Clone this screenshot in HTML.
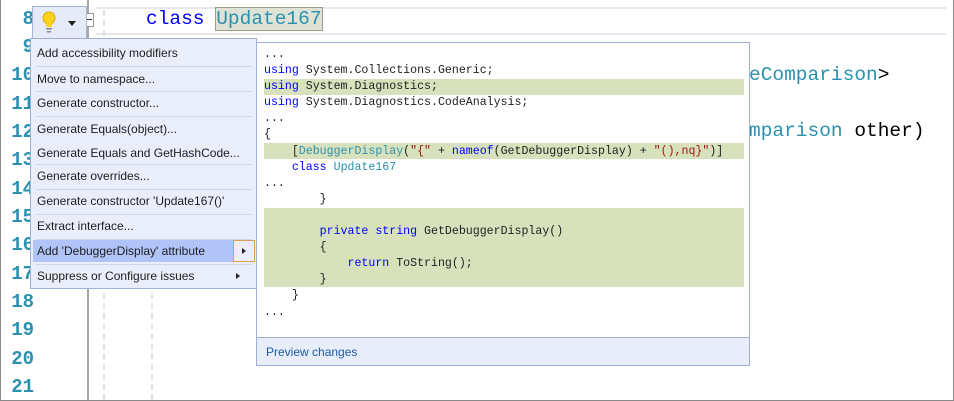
<!DOCTYPE html>
<html><head><style>
*{margin:0;padding:0;box-sizing:border-box}
body{width:954px;height:401px;overflow:hidden;background:#fff;position:relative;font-family:"Liberation Sans",sans-serif}
.frame{position:absolute;left:0;top:0;width:954px;height:401px;border:1px solid #8a8a8a;border-top:none}
.ln{position:absolute;left:0;width:34px;text-align:right;font-family:"Liberation Mono",monospace;font-size:19px;font-weight:bold;color:#2b91af}
.vline{position:absolute;left:87px;top:0;width:2px;height:401px;background:#a8a8a8}
.cur{position:absolute;left:96px;top:7px;width:850px;height:28px;border-top:2px solid #e6e6ee;border-bottom:2px solid #e6e6ee}
.code{position:absolute;font-family:"Liberation Mono",monospace;font-size:19.5px;white-space:pre;color:#000}
.menu{position:absolute;left:30px;top:38px;width:227px;height:251px;background:#e9eefa;border:1px solid #9eb0d6}
.mi{position:absolute;left:6px;font-size:12px;color:#1e1e1e}
.sep{position:absolute;left:5px;width:216px;height:1px;background:#cdd6ea}
.prev{position:absolute;left:256px;top:42px;width:494px;height:324px;border:1px solid #9eb0d6;background:#fff}
.pc{position:absolute;left:7px;font-family:"Liberation Mono",monospace;font-size:11.6px;white-space:pre;color:#1e1e1e;line-height:16.1px}
.hl{position:absolute;left:7px;width:480px;background:#d7e2bd}
.k{color:#0000ff}.t{color:#2b91af}.s{color:#a31515}
</style></head><body>
<div class="vline"></div>
<div class="cur"></div>
<div style="position:absolute;left:103px;top:10px;width:2px;height:390px;border-left:2px dashed #e2e2e2"></div>
<div style="position:absolute;left:151px;top:40px;width:2px;height:360px;border-left:2px dashed #e2e2e2"></div>
<div style="position:absolute;left:84px;top:13px;width:10px;height:14px;border:1px solid #999;background:#fff"></div>
<div style="position:absolute;left:86px;top:19px;width:6px;height:1px;background:#333"></div>
<div class="code" style="left:146px;top:8px"><span class="k">class</span> <span class="t" style="background:#dfe3d6;outline:1px solid #9a9a8a">Update167</span></div>
<div class="code t" style="left:749px;top:64px">eComparison<span style="color:#000">&gt;</span></div>
<div class="code t" style="left:749px;top:120px">mparison <span style="color:#000">other)</span></div>
<div class="ln" style="top:8px">8</div><div class="ln" style="top:36px">9</div>
<div class="ln" style="top:64px">10</div><div class="ln" style="top:93px">11</div>
<div class="ln" style="top:121px">12</div><div class="ln" style="top:149px">13</div>
<div class="ln" style="top:178px">14</div><div class="ln" style="top:206px">15</div>
<div class="ln" style="top:234px">16</div><div class="ln" style="top:263px">17</div>
<div class="ln" style="top:291px">18</div><div class="ln" style="top:319px">19</div>
<div class="ln" style="top:348px">20</div><div class="ln" style="top:376px">21</div>
<div style="position:absolute;left:32px;top:6px;width:55px;height:33px;background:#e5ebf9;border:1px solid #a6b6d8"></div>
<svg style="position:absolute;left:38px;top:9px" width="46" height="28">
<circle cx="11" cy="9" r="6" fill="#fcd21c" stroke="#e0a800"/>
<rect x="8" y="14" width="6" height="4" fill="#fcd21c"/>
<rect x="8" y="19" width="6" height="1.5" fill="#888"/><rect x="9" y="22" width="4" height="1.5" fill="#888"/>
<path d="M30 12 L38 12 L34 17 Z" fill="#222"/></svg>
<div class="menu">
<div class="mi" style="top:7px">Add accessibility modifiers</div><div class="sep" style="top:27px"></div>
<div class="mi" style="top:33px">Move to namespace...</div><div class="sep" style="top:52px"></div>
<div class="mi" style="top:57px">Generate constructor...</div><div class="sep" style="top:77px"></div>
<div class="mi" style="top:83px">Generate Equals(object)...</div>
<div class="mi" style="top:107px">Generate Equals and GetHashCode...</div><div class="sep" style="top:125px"></div>
<div class="mi" style="top:130px">Generate overrides...</div><div class="sep" style="top:150px"></div>
<div class="mi" style="top:155px">Generate constructor 'Update167()'</div><div class="sep" style="top:175px"></div>
<div class="mi" style="top:180px">Extract interface...</div><div class="sep" style="top:200px"></div>
<div style="position:absolute;left:2px;top:201px;width:222px;height:22px;background:#b0c4f8"></div>
<div style="position:absolute;left:202px;top:201px;width:22px;height:22px;border:1px solid #d8a050;background:#e9eefa"></div>
<div style="position:absolute;left:211px;top:209px;border-left:4px solid #222;border-top:3.5px solid transparent;border-bottom:3.5px solid transparent"></div>
<div class="mi" style="top:205px">Add 'DebuggerDisplay' attribute</div><div class="sep" style="top:225px"></div>
<div class="mi" style="top:230px">Suppress or Configure issues</div>
<div style="position:absolute;left:205px;top:234px;border-left:4px solid #222;border-top:3.5px solid transparent;border-bottom:3.5px solid transparent"></div>
</div>
<div class="prev">
<div class="hl" style="top:36px;height:16px"></div>
<div class="hl" style="top:100px;height:16px"></div>
<div class="hl" style="top:165px;height:79px"></div>
<div class="pc" style="top:4px">...
<span class="k">using</span> System.Collections.Generic;
<span class="k">using</span> System.Diagnostics;
<span class="k">using</span> System.Diagnostics.CodeAnalysis;
...
{
    [<span class="t">DebuggerDisplay</span>(<span class="s">"{"</span> + <span class="k">nameof</span>(GetDebuggerDisplay) + <span class="s">"(),nq}"</span>)]
    <span class="k">class</span> <span class="t">Update167</span>
...
        }

        <span class="k">private</span> <span class="k">string</span> GetDebuggerDisplay()
        {
            <span class="k">return</span> ToString();
        }
    }
...</div>
<div style="position:absolute;left:0;top:294px;width:492px;height:28px;background:#e8edfa;border-top:1px solid #9eb0d6"></div>
<div style="position:absolute;left:9px;top:302px;font-size:12px;color:#1e5aa8">Preview changes</div>
</div>
<div class="frame"></div>
</body></html>
